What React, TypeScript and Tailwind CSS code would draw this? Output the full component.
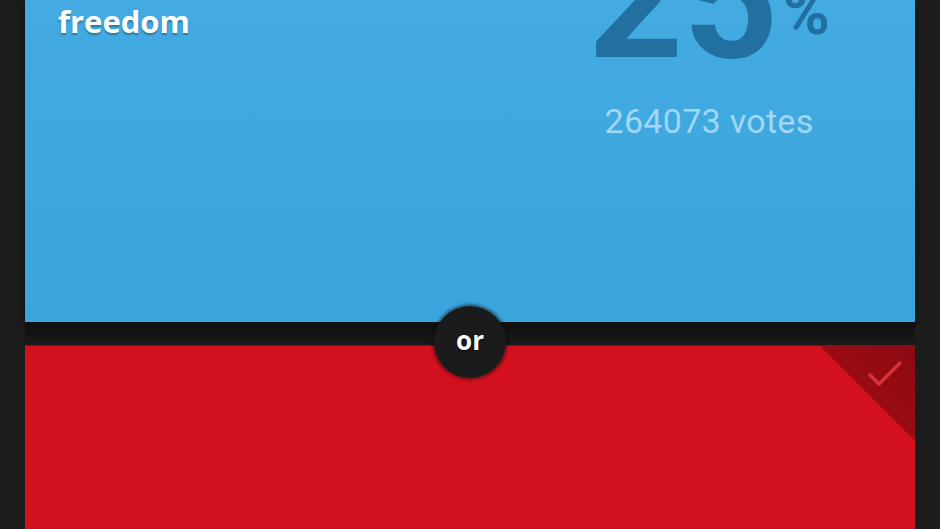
export default function App() {
  return (
    <div className="relative w-[940px] h-[529px] overflow-hidden bg-[#1c1c1c] px-[25px] flex flex-col">
      {/* blue option */}
      <div className="h-[322px] shrink-0 flex justify-between bg-gradient-to-b from-[#43abe2] to-[#3aa4dc] shadow-[0_3px_4px_rgba(0,0,0,0.7)]">
        <div
          className="pl-[33px] mt-[-36px] text-white font-bold text-[31px] leading-[38px] [text-shadow:0_2px_2px_rgba(0,0,0,0.3)]"
          style={{ fontFamily: '"Open Sans", sans-serif' }}
        >
          <div>have a lot of time but no</div>
          <div>freedom</div>
        </div>
        <div className="w-[300px] mr-[56px] flex flex-col items-center" style={{ fontFamily: 'Roboto, sans-serif' }}>
          <div className="flex items-start mt-[-82px] text-[#21709f]">
            <span className="text-[166px] leading-none font-bold">25</span>
            <span className="text-[64px] leading-none font-bold mt-[63px] ml-[4px]">%</span>
          </div>
          <div className="mt-[20px] text-[34px] leading-none font-normal text-[#a0d7f5] tracking-[0.3px]">264073 votes</div>
        </div>
      </div>

      {/* gap */}
      <div className="h-[24px] shrink-0 bg-gradient-to-b from-[#0e0e0e] to-[#1a1a1a]" />

      {/* red option */}
      <div className="relative flex-1 bg-[#d3111e] shadow-[0_-1px_0_rgba(255,80,80,0.25)]">
        <div className="absolute top-0 right-0 w-[95px] h-[95px] bg-gradient-to-bl from-[#8c0a10] to-[#a80d16] [clip-path:polygon(0_0,100%_0,100%_100%)]">
          <svg className="absolute right-[12px] top-[14px]" width="36" height="28" viewBox="0 0 36 28">
            <polyline points="3,15 12,24 33,3" fill="none" stroke="#d6343b" strokeWidth="3.5" strokeLinecap="round" strokeLinejoin="round" />
          </svg>
        </div>
      </div>

      {/* or badge */}
      <div
        className="absolute left-[434px] top-[306px] w-[72px] h-[72px] rounded-full bg-[#1b1b1b] flex items-center justify-center text-white font-bold text-[26px] shadow-[0_0_3px_2px_rgba(0,0,0,0.45),0_0_0_1px_rgba(255,255,255,0.06)] [text-shadow:0_1px_2px_rgba(0,0,0,0.6)]"
        style={{ fontFamily: '"Open Sans", sans-serif' }}
      >
        <span className="mt-[-4px]">or</span>
      </div>
    </div>
  );
}
